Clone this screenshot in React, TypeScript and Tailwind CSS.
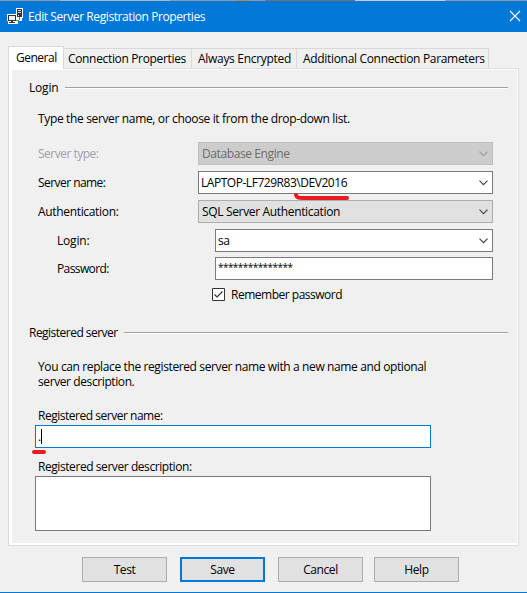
import React from "react";

function Chevron({ color = "#444" }: { color?: string }) {
  return (
    <svg className="mr-[3px] shrink-0" width="11" height="7" viewBox="0 0 11 7" fill="none" stroke={color} strokeWidth="1.2">
      <path d="M1.5 1.7 5.5 5.7 9.5 1.7" />
    </svg>
  );
}

function Rule() {
  return <div className="mr-[9px] h-[2px] flex-1 border-t border-[#a0a0a0] bg-white" />;
}

function ServerIcon() {
  return (
    <svg width="16" height="16" viewBox="0 0 16 16" shapeRendering="crispEdges">
      <path d="M9 0h7v10h-1v3h-4v3H1v-3H0V6h9z" fill="#fff" />
      <path d="M10 1h5v8h-5zM1 7h8v6H1zM4 13h2v1H4zM2 14h6v1H2z" fill="#333" />
      <path d="M2 8h6v4H2z" fill="#f0f0f0" />
      <path d="M11 2h3v1h-3zM11 4h3v1h-3zM11 7h1v1h-1z" fill="#ddd" />
      <path d="M12 9h1v3h-1zM9 12h3v1H9z" fill="#38a838" />
    </svg>
  );
}

const tab = "flex h-5 items-center border-t border-r border-[#d9d9d9] whitespace-nowrap";
const box = "flex h-[23px] items-center justify-between border border-[#7a7a7a] bg-white";
const button = "flex h-[25px] w-[85px] items-center justify-center border border-[#adadad] bg-[#e1e1e1]";

export default function App() {
  return (
    <div className="flex h-[593px] w-[527px] flex-col overflow-hidden border-b border-[#0078d7] bg-[#f0f0f0] font-['Open_Sans',sans-serif] text-[12px] leading-[15px] tracking-[-0.4px] whitespace-nowrap text-black">
      <div className="flex h-px shrink-0 bg-[#8e99a6]">
        <div className="ml-[60px] w-[110px] bg-[#b4b8bd]" />
        <div className="ml-[66px] w-[14px] bg-[#b98a3c]" />
        <div className="ml-[15px] w-[90px] bg-[#75706e]" />
        <div className="w-[90px] bg-[#c9cdd2]" />
      </div>
      <div className="flex h-[31px] shrink-0 items-center bg-[#0078d7] pb-px pl-[7px] text-white">
        <ServerIcon />
        <span className="mt-px ml-[5px] tracking-[-0.42px]">Edit Server Registration Properties</span>
        <svg className="mr-[6px] ml-auto" width="12" height="12" viewBox="0 0 12 12" stroke="#fff" strokeWidth="1.1">
          <path d="M1 1 11 11M11 1 1 11" />
        </svg>
      </div>

      <div className="mt-[14px] ml-2 flex h-[22px] shrink-0 items-end">
        <div className="z-10 -mb-px flex h-[23px] w-[56px] items-center border border-b-0 border-[#d9d9d9] bg-white pb-[2px] pl-[7px] tracking-[-0.5px]">General</div>
        <div className={`${tab} w-[128px] pl-[4px] tracking-[-0.34px]`}>Connection Properties</div>
        <div className={`${tab} w-[105px] pl-[6px] tracking-[-0.3px]`}>Always Encrypted</div>
        <div className={`${tab} w-[192px] pl-[6px] tracking-[-0.32px]`}>Additional Connection Parameters</div>
      </div>

      <div className="ml-2 h-[478px] w-[511px] shrink-0 border border-[#dcdcdc] bg-white pt-px pr-px pb-[2px] pl-[3px]">
        <div className="flex h-full flex-col bg-[#f0f0f0] pl-[17px]">
          <div className="mt-[10px] flex h-[15px] items-center gap-[6px]">
            <span className="w-[30px] tracking-[-0.2px]">Login</span>
            <Rule />
          </div>
          <div className="mt-[16px] ml-[9px] h-[15px] tracking-[-0.35px]">Type the server name, or choose it from the drop-down list.</div>

          <div className="mt-[16px] ml-[9px] flex w-[455px] flex-col gap-[6px]">
            <div className="flex h-[23px] items-center">
              <span className="w-[160px] tracking-[-0.5px] text-[#a0a0a0]">Server type:</span>
              <div className="flex h-[23px] flex-1 items-center justify-between border border-[#bfbfbf] bg-[#cccccc] pl-[3px] text-[#6d6d6d]">
                Database Engine
                <Chevron color="#9b9b9b" />
              </div>
            </div>
            <div className="flex h-[23px] items-center">
              <span className="w-[160px] tracking-[-0.55px]">Server name:</span>
              <div className={`${box} relative flex-1 pb-px pl-[2px] tracking-[-0.46px]`}>
                LAPTOP-LF729R83\DEV2016
                <Chevron />
                <svg className="absolute top-[20px] left-[94px]" width="58" height="10" viewBox="0 0 58 10" fill="none" stroke="#e81b1f" strokeWidth="4" strokeLinecap="round">
                  <path d="M3 3C4 6 6 6 10 6H54" />
                </svg>
              </div>
            </div>
            <div className="flex h-[23px] items-center">
              <span className="w-[160px] tracking-[-0.33px]">Authentication:</span>
              <div className="flex h-[23px] flex-1 items-center justify-between border border-[#adadad] bg-[#e1e1e1] pl-[3px] tracking-[-0.34px]">
                SQL Server Authentication
                <Chevron />
              </div>
            </div>
            <div className="flex h-[23px] items-center pl-[19px]">
              <span className="w-[158px] tracking-[-0.2px]">Login:</span>
              <div className={`${box} flex-1 pl-[2px]`}>
                sa
                <Chevron />
              </div>
            </div>
          </div>
          <div className="mt-[5px] ml-[28px] flex h-[23px] w-[436px] items-center">
            <span className="w-[158px] tracking-[-0.6px]">Password:</span>
            <div className={`${box} flex-1 pb-[3px] pl-[2px] text-[10px] tracking-[-0.55px]`}>***************</div>
          </div>
          <div className="mt-[7px] ml-[183px] flex h-[15px] items-center gap-[6px]">
            <svg width="13" height="13" viewBox="0 0 13 13" fill="none">
              <path d="M.5.5h12v12H.5z" fill="#fff" stroke="#333" />
              <path d="M2.5 6.5 5 9 10.5 3.5" stroke="#333" strokeWidth="1.2" />
            </svg>
            <span className="tracking-[-0.49px]">Remember password</span>
          </div>

          <div className="mt-[23px] flex h-[15px] items-center gap-[6px]">
            <span className="w-[89px] tracking-[-0.52px]">Registered server</span>
            <Rule />
          </div>
          <div className="mt-[19px] ml-[9px] h-[15px] tracking-[-0.38px]">You can replace the registered server name with a new name and optional</div>
          <div className="ml-[9px] h-[15px]">server description.</div>
          <div className="mt-[19px] ml-[9px] h-[15px] tracking-[-0.48px]">Registered server name:</div>
          <div className="relative mt-[2px] ml-[6px] flex h-[23px] w-[396px] items-center border border-[#0078d7] bg-white pl-[2px]">
            .<span className="h-[15px] w-px bg-black" />
            <div className="absolute top-[24px] -left-[4px] h-[4px] w-[14px] rounded-full bg-[#e81b1f]" />
          </div>
          <div className="mt-[11px] ml-[9px] h-[15px] tracking-[-0.43px]">Registered server description:</div>
          <div className="mt-[2px] ml-[6px] h-[55px] w-[396px] border border-[#7a7a7a] bg-white" />
        </div>
      </div>

      <div className="mt-[11px] ml-[82px] flex">
        <div className={button}>Test</div>
        <div className="ml-[13px] flex h-[25px] w-[85px] items-center justify-center border-2 border-[#0078d7] bg-[#e1e1e1]">Save</div>
        <div className={`${button} ml-[13px]`}>Cancel</div>
        <div className={`${button} ml-[11px]`}>Help</div>
      </div>
    </div>
  );
}
